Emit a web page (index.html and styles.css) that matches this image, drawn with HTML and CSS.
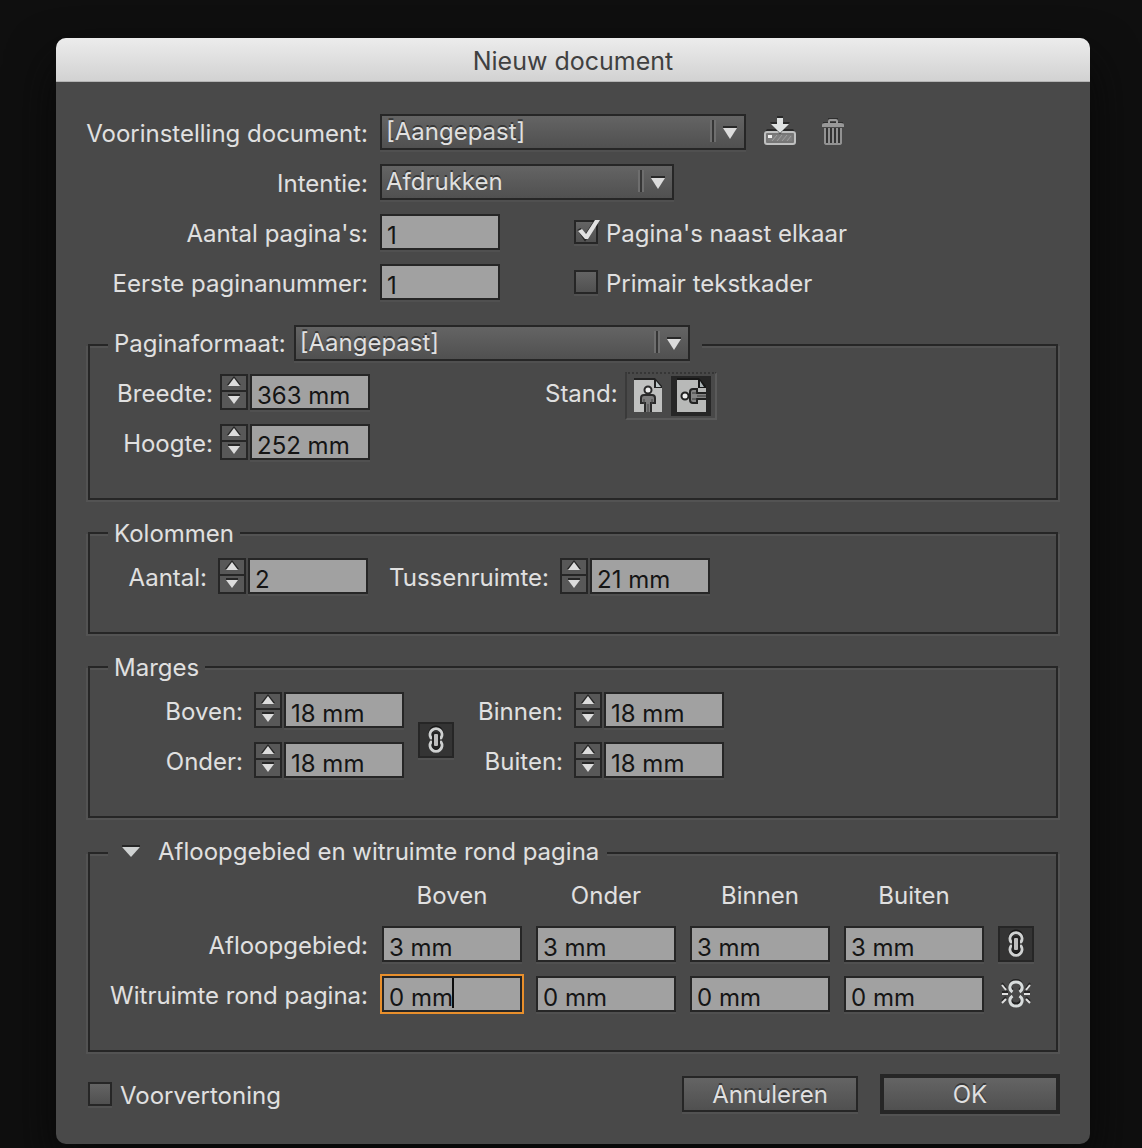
FILE: index.html
```html
<!DOCTYPE html>
<html lang="nl">
<head>
<meta charset="utf-8">
<meta name="viewport" content="width=device-width, initial-scale=1">
<title>Nieuw document</title>
<link rel="stylesheet" href="styles.css">
</head>
<body>
<svg class="sprite" width="0" height="0" aria-hidden="true">
  <symbol id="chain" viewBox="0 0 32 32">
    <g fill="none" stroke="#181818" stroke-width="4">
      <path d="M11 12a5.500 6 0 1 1 10 0"/>
      <path d="M11 18a5.500 6 0 1 0 10 0"/>
    </g>
    <g fill="none" stroke="#cfd1d1" stroke-width="3" stroke-linecap="round">
      <path d="M11 14a6 6 0 1 1 10 0"/>
      <path d="M11 18a6 6 0 1 0 10 0"/>
    </g>
    <rect x="12" y="8" width="8" height="16" rx="3" fill="#222"/>
    <rect x="14" y="10" width="4" height="12" rx="1" fill="#bcbcbc"/>
  </symbol>
  <symbol id="chain-broken" viewBox="0 0 32 32">
    <g fill="none" stroke="#222" stroke-width="3">
      <path d="M13 12C9 11 9 2.500 16 2.500S23 11 19 12"/>
      <path d="M12 18C9 21 11 26 16 26s7-5 4-8"/>
    </g>
    <g fill="none" stroke="#d8dcdc" stroke-width="3">
      <path d="M12.500 14C8 11 9.500 4 16 4s8 7 3.500 10"/>
      <path d="M12.500 18C8 21 9.500 28 16 28s8-7 3.500-10"/>
    </g>
    <path d="M2 14h6M24 14h6M2 5l4 5M30 5l-4 5M2 23l4-4M30 23l-4-4" fill="none" stroke="#262626" stroke-width="2"/>
    <path d="M2 16h6M24 16h6M2 7l4 5M30 7l-4 5M2 25l4-4M30 25l-4-4" fill="none" stroke="#e0e0e0" stroke-width="2"/>
  </symbol>
</svg>

<main class="dialog" role="dialog" aria-labelledby="dialog-title">
  <h1 class="titlebar" id="dialog-title">Nieuw document</h1>
  <form class="content">
    <div class="general">
      <label class="label" for="preset">Voorinstelling document:</label>
      <div class="line">
        <select class="select preset" id="preset"><option>[Aangepast]</option></select>
        <button class="icon-button" type="button" aria-label="Voorinstelling opslaan">
          <svg width="34" height="32" viewBox="0 0 34 32">
            <path d="M4 13h26l3 4v5H1v-5z" fill="#2a2a2a"/>
            <rect x="2" y="16" width="30" height="12" rx="2" fill="#777" stroke="#bfc0c0" stroke-width="2"/>
            <rect x="5" y="19" width="24" height="6" fill="#7e7e7e"/>
            <path d="M9 25l5-6M14 25l5-6M19 25l5-6M24 25l4-5" stroke="#a0a0a0" stroke-width="1"/>
            <rect x="5" y="19" width="4" height="3" fill="#f0f0f0"/>
            <path d="M14 0h6v6h7l-10 12L7 6h7z" fill="#2a2a2a"/>
            <path d="M14 2h6v6h6l-9 9-9-9h6z" fill="#dfe2e2"/>
          </svg>
        </button>
        <button class="icon-button trash" type="button" aria-label="Voorinstelling verwijderen">
          <svg width="24" height="32" viewBox="0 0 24 32">
            <path d="M8 6V3h8v3M2 7h20" fill="none" stroke="#2e2e2e" stroke-width="2"/>
            <path d="M8 8V5q0-1 1-1h6q1 0 1 1v3" fill="none" stroke="#999" stroke-width="2"/>
            <path d="M1 9q0-2 3-2h16q3 0 3 2v2H1z" fill="#989898"/>
            <path d="M3 12h18v15q0 2-2 2H5q-2 0-2-2z" fill="#333"/>
            <path d="M4 12v15q0 1 2 1h12q2 0 2-1V12M8 12v15M12 12v15M16 12v15" fill="none" stroke="#929292" stroke-width="2"/>
          </svg>
        </button>
      </div>
      <label class="label" for="intent">Intentie:</label>
      <div class="line"><select class="select intent" id="intent"><option>Afdrukken</option></select></div>
      <label class="label" for="pages">Aantal pagina's:</label>
      <div class="line paired">
        <input class="field" id="pages" type="text" value="1">
        <label class="check"><input type="checkbox" checked><span>Pagina's naast elkaar</span></label>
      </div>
      <label class="label" for="first">Eerste paginanummer:</label>
      <div class="line paired">
        <input class="field" id="first" type="text" value="1">
        <label class="check"><input type="checkbox"><span>Primair tekstkader</span></label>
      </div>
    </div>

    <fieldset class="group size-group">
      <legend class="legend with-select">
        <label for="format">Paginaformaat:</label>
        <select class="select format" id="format"><option>[Aangepast]</option></select>
      </legend>
      <div class="size">
        <label class="label" for="width">Breedte:</label>
        <div class="stepper">
          <span class="arrows"><button type="button" class="up" aria-label="Breedte verhogen"></button><button type="button" class="down" aria-label="Breedte verlagen"></button></span>
          <input class="field" id="width" type="text" value="363 mm">
        </div>
        <div class="orientation">
          <span class="label">Stand:</span>
          <div class="toggle">
            <button type="button" aria-label="Staand">
              <svg width="28" height="36" viewBox="0 0 28 36">
                <path d="M0 0h21l7 8v5H0z" fill="#222"/>
                <path d="M0 2h20v8h8v24H0z" fill="#c0c1c0"/>
                <path d="M22 3l5 6h-5z" fill="#bfc8c9"/>
                <path d="M11 34V25H7v-5q0-3 3-3h8q3 0 3 3v5h-4v9" fill="#7d7d7d" stroke="#2a2a2a" stroke-width="2"/>
                <path d="M14 26v8M10 21v5M18 21v5" stroke="#444" stroke-width="1"/>
                <circle cx="14" cy="12" r="3.500" fill="#eee" stroke="#2a2a2a" stroke-width="2"/>
              </svg>
            </button>
            <button type="button" class="pressed" aria-label="Liggend" aria-pressed="true">
              <svg width="30" height="36" viewBox="0 0 30 36">
                <path d="M0 0h22l7 8v5H0z" fill="#171717"/>
                <path d="M0 2h21v8h8v24H0z" fill="#b8b9b8"/>
                <path d="M23 3l4 6h-4z" fill="#aeb6b8"/>
                <path d="M29 15h-9v-4h-4q-3 0-3 3v8q0 3 3 3h4v-4h9" fill="#858585" stroke="#222" stroke-width="2"/>
                <path d="M20 18h9M15 15h5M15 21h5" stroke="#3a3a3a" stroke-width="1"/>
                <circle cx="8" cy="18" r="3.500" fill="#eee" stroke="#222" stroke-width="2"/>
              </svg>
            </button>
          </div>
        </div>
        <label class="label" for="height">Hoogte:</label>
        <div class="stepper">
          <span class="arrows"><button type="button" class="up" aria-label="Hoogte verhogen"></button><button type="button" class="down" aria-label="Hoogte verlagen"></button></span>
          <input class="field" id="height" type="text" value="252 mm">
        </div>
      </div>
    </fieldset>

    <fieldset class="group">
      <legend class="legend">Kolommen</legend>
      <div class="columns">
        <label class="label" for="columns">Aantal:</label>
        <div class="stepper">
          <span class="arrows"><button type="button" class="up" aria-label="Aantal verhogen"></button><button type="button" class="down" aria-label="Aantal verlagen"></button></span>
          <input class="field" id="columns" type="text" value="2">
        </div>
        <label class="label" for="gutter">Tussenruimte:</label>
        <div class="stepper">
          <span class="arrows"><button type="button" class="up" aria-label="Tussenruimte verhogen"></button><button type="button" class="down" aria-label="Tussenruimte verlagen"></button></span>
          <input class="field" id="gutter" type="text" value="21 mm">
        </div>
      </div>
    </fieldset>

    <fieldset class="group">
      <legend class="legend">Marges</legend>
      <div class="margins">
        <label class="label" for="m-top">Boven:</label>
        <div class="stepper">
          <span class="arrows"><button type="button" class="up" aria-label="Boven verhogen"></button><button type="button" class="down" aria-label="Boven verlagen"></button></span>
          <input class="field" id="m-top" type="text" value="18 mm">
        </div>
        <button class="link-button linked" type="button" aria-label="Marges koppelen" aria-pressed="true"><svg width="32" height="32"><use href="#chain"/></svg></button>
        <label class="label" for="m-in">Binnen:</label>
        <div class="stepper">
          <span class="arrows"><button type="button" class="up" aria-label="Binnen verhogen"></button><button type="button" class="down" aria-label="Binnen verlagen"></button></span>
          <input class="field" id="m-in" type="text" value="18 mm">
        </div>
        <label class="label" for="m-bottom">Onder:</label>
        <div class="stepper">
          <span class="arrows"><button type="button" class="up" aria-label="Onder verhogen"></button><button type="button" class="down" aria-label="Onder verlagen"></button></span>
          <input class="field" id="m-bottom" type="text" value="18 mm">
        </div>
        <label class="label" for="m-out">Buiten:</label>
        <div class="stepper">
          <span class="arrows"><button type="button" class="up" aria-label="Buiten verhogen"></button><button type="button" class="down" aria-label="Buiten verlagen"></button></span>
          <input class="field" id="m-out" type="text" value="18 mm">
        </div>
      </div>
    </fieldset>

    <fieldset class="group bleed-group">
      <legend class="legend raised">
        <button class="disclosure" type="button" aria-expanded="true">
          <svg width="18" height="14" viewBox="0 0 18 14"><path d="M0 0h18v3H0z" fill="#262626"/><path d="M0 2h18l-9 10z" fill="#cfd2d2"/></svg>
          Afloopgebied en witruimte rond pagina
        </button>
      </legend>
      <div class="bleed">
        <span class="head first" id="h-top">Boven</span>
        <span class="head" id="h-bottom">Onder</span>
        <span class="head" id="h-in">Binnen</span>
        <span class="head last" id="h-out">Buiten</span>

        <label class="label" id="r-bleed" for="b-top">Afloopgebied:</label>
        <input class="field" id="b-top" type="text" value="3 mm">
        <input class="field" type="text" value="3 mm" aria-labelledby="r-bleed h-bottom">
        <input class="field" type="text" value="3 mm" aria-labelledby="r-bleed h-in">
        <input class="field" type="text" value="3 mm" aria-labelledby="r-bleed h-out">
        <button class="link-button linked" type="button" aria-label="Afloopgebied koppelen" aria-pressed="true"><svg width="32" height="32"><use href="#chain"/></svg></button>

        <label class="label" id="r-slug" for="s-top">Witruimte rond pagina:</label>
        <span class="active"><input class="field" id="s-top" type="text" value="0 mm"></span>
        <input class="field" type="text" value="0 mm" aria-labelledby="r-slug h-bottom">
        <input class="field" type="text" value="0 mm" aria-labelledby="r-slug h-in">
        <input class="field" type="text" value="0 mm" aria-labelledby="r-slug h-out">
        <button class="link-button" type="button" aria-label="Witruimte koppelen"><svg width="32" height="32"><use href="#chain-broken"/></svg></button>
      </div>
    </fieldset>

    <footer class="footer">
      <label class="check"><input type="checkbox"><span>Voorvertoning</span></label>
      <button class="button" type="button">Annuleren</button>
      <button class="button primary" type="submit">OK</button>
    </footer>
  </form>
</main>
</body>
</html>
```

FILE: styles.css
```css
:root {
  --panel: #494949;
  --edge: #262626;
  --glow: #535353;
  --text: #e0e0e0;
  --face: linear-gradient(#646464, #505050);
}

* {
  box-sizing: border-box;
}

body {
  margin: 0;
  padding: 38px 52px 4px 56px;
  background: #0f0f0f;
  color: var(--text);
  font: 24px/36px Inter, "Liberation Sans", sans-serif;
}

input,
select,
button {
  margin: 0;
  color: inherit;
  font: inherit;
}

button {
  padding: 0;
  border: 0;
  background: none;
}

svg {
  display: block;
}

.sprite {
  position: absolute;
}

.dialog {
  border-radius: 10px;
  background: var(--panel);
  box-shadow: 0 24px 48px #080808;
}

.titlebar {
  margin: 0;
  height: 44px;
  border-bottom: 1px solid #b4b4b4;
  border-radius: 10px 10px 0 0;
  background: linear-gradient(#ececec, #d2d2d2);
  color: #404040;
  font-size: 25px;
  font-weight: 400;
  line-height: 46px;
  text-align: center;
}

.content {
  padding: 32px 30px 30px 32px;
}

.label {
  justify-self: end;
  height: 36px;
  line-height: 40px;
  white-space: nowrap;
}

/* General settings */
.general {
  display: grid;
  grid-template-columns: 280px 1fr;
  gap: 14px 12px;
}

.line {
  display: flex;
  align-items: center;
}

.icon-button {
  margin-left: 17px;
}

.trash {
  margin-left: 24px;
}

.paired {
  gap: 74px;
}

.field {
  width: 120px;
  height: 36px;
  padding: 6px 4px 0 5px;
  border: 2px solid var(--edge);
  border-radius: 0;
  outline: 0;
  background: #a1a1a1;
  box-shadow: 0 2px 0 #505050;
  color: #151515;
  line-height: 28px;
}

.select {
  height: 36px;
  padding: 0 40px 0 4px;
  border: 2px solid var(--edge);
  border-radius: 0;
  appearance: none;
  background:
    url("data:image/svg+xml,%3Csvg xmlns='http://www.w3.org/2000/svg' width='34' height='32'%3E%3Cpath d='M0 4h2v22H0zM4 4h2v22H4z' fill='%236e6e6e'/%3E%3Cpath d='M2 4h2v22H2z' fill='%23363636'/%3E%3Cpath d='M13 10h14v2H13z' fill='%23282828'/%3E%3Cpath d='M13 12h14l-7 11z' fill='%23dcdcdc'/%3E%3C/svg%3E") right top no-repeat,
    var(--face);
  box-shadow: 0 2px 0 #505050;
  line-height: 32px;
  text-shadow: 0 -2px 0 #383838;
}

.preset {
  width: 366px;
}

.intent {
  width: 294px;
}

.format {
  width: 396px;
}

.check {
  display: flex;
  align-items: center;
  gap: 8px;
}

.check span {
  height: 36px;
  line-height: 40px;
}

.check input {
  position: relative;
  width: 24px;
  height: 24px;
  border: 2px solid var(--edge);
  appearance: none;
  background: var(--face);
  box-shadow: 0 2px 0 #525252;
}

.check input:checked::before {
  content: "";
  position: absolute;
  top: -2px;
  left: 0;
  width: 26px;
  height: 22px;
  background: url("data:image/svg+xml,%3Csvg xmlns='http://www.w3.org/2000/svg' width='26' height='22'%3E%3Cpath d='M3 9l6 9L20 1' fill='none' stroke='%23262626' stroke-width='4'/%3E%3Cpath d='M2 11l4-2 4 5L19 0h5L12 19H9z' fill='%23e2e2e2'/%3E%3C/svg%3E") no-repeat;
}

/* Framed groups */
.group {
  margin: 13px 2px 0 0;
  padding: 5px 18px 38px;
  border: 2px solid var(--edge);
  box-shadow: inset 0 2px 0 var(--glow), -2px 2px 0 var(--glow), 2px 2px 0 var(--glow);
}

.size-group {
  margin-top: 25px;
  padding-top: 9px;
}

.bleed-group {
  margin-top: 15px;
}

.legend {
  height: 40px;
  padding: 0 6px;
  background: var(--panel);
  line-height: 42px;
}

.with-select {
  display: flex;
  gap: 8px;
  padding-right: 12px;
  line-height: 38px;
}

.raised {
  padding: 0 8px 0 14px;
  line-height: 38px;
}

.disclosure {
  display: flex;
  align-items: center;
  gap: 18px;
}

.stepper {
  display: flex;
  gap: 2px;
}

.arrows {
  display: grid;
  grid-template-rows: 14px 16px;
  gap: 2px;
  width: 28px;
  padding: 2px;
  background: var(--edge);
}

.up,
.down {
  background: #585858 center top no-repeat;
}

.up {
  background-image: url("data:image/svg+xml,%3Csvg xmlns='http://www.w3.org/2000/svg' width='14' height='12'%3E%3Cpath d='M0 9L7 0l7 9z' fill='%23262626'/%3E%3Cpath d='M1 10L7 2l6 8z' fill='%23dcdcdc'/%3E%3C/svg%3E");
}

.down {
  background-image: url("data:image/svg+xml,%3Csvg xmlns='http://www.w3.org/2000/svg' width='14' height='14'%3E%3Cpath d='M1 2h12v2H1z' fill='%23262626'/%3E%3Cpath d='M1 4h12l-6 8z' fill='%23dcdcdc'/%3E%3C/svg%3E");
}

.size {
  display: grid;
  grid-template-columns: 105px 150px 1fr;
  column-gap: 7px;
  row-gap: 14px;
}

.orientation {
  display: flex;
  gap: 7px;
  height: 36px;
  padding-left: 168px;
}

.toggle {
  display: flex;
  align-items: center;
  gap: 9px;
  width: 92px;
  height: 48px;
  margin-top: -2px;
  padding: 0 2px 0 7px;
  border: 2px solid #5a5a5a;
  border-top: 2px dotted #363636;
  border-left: 2px solid #3a3a3a;
}

.toggle button {
  flex: none;
}

.toggle .pressed {
  padding: 2px 4px 2px 6px;
  background: var(--edge);
}

.columns {
  display: grid;
  grid-template-columns: 99px 150px 170px 150px;
  column-gap: 11px;
}

.margins {
  display: grid;
  grid-template-columns: 135px 150px 36px 101px 150px;
  column-gap: 11px;
  row-gap: 14px;
}

.margins .link-button {
  grid-row: 1 / 3;
  grid-column: 3;
  align-self: center;
  margin: 10px 0 0 3px;
}

.link-button {
  width: 36px;
  height: 36px;
  padding: 2px;
}

.linked {
  border: 2px solid var(--edge);
  padding: 0;
  background: #343434;
  box-shadow: 0 2px 0 #525252;
}

.bleed {
  display: grid;
  grid-template-columns: 260px repeat(4, 140px) 36px;
  gap: 14px;
}

.bleed .field {
  width: 100%;
}

.head {
  height: 34px;
  line-height: 36px;
  text-align: center;
}

.first {
  grid-column: 2;
}

.last {
  grid-column: 5 / 7;
  width: 140px;
}

.active {
  position: relative;
  height: 36px;
  outline: 2px solid #e88f2c;
}

.active::after {
  content: "";
  position: absolute;
  top: 2px;
  left: 70px;
  width: 2px;
  height: 30px;
  background: #0c0c0c;
}

.active .field {
  display: block;
}

/* Dialog actions */
.footer {
  display: flex;
  align-items: center;
  gap: 22px;
  margin-top: 22px;
}

.footer .check {
  margin-right: auto;
}

.button {
  width: 176px;
  height: 36px;
  padding-top: 2px;
  border: 2px solid var(--edge);
  background: var(--face);
  box-shadow: 0 2px 0 #525252;
  line-height: 30px;
  text-shadow: 0 -2px 0 #383838;
}

.primary {
  width: 180px;
  height: 40px;
  border-width: 4px;
}
```
